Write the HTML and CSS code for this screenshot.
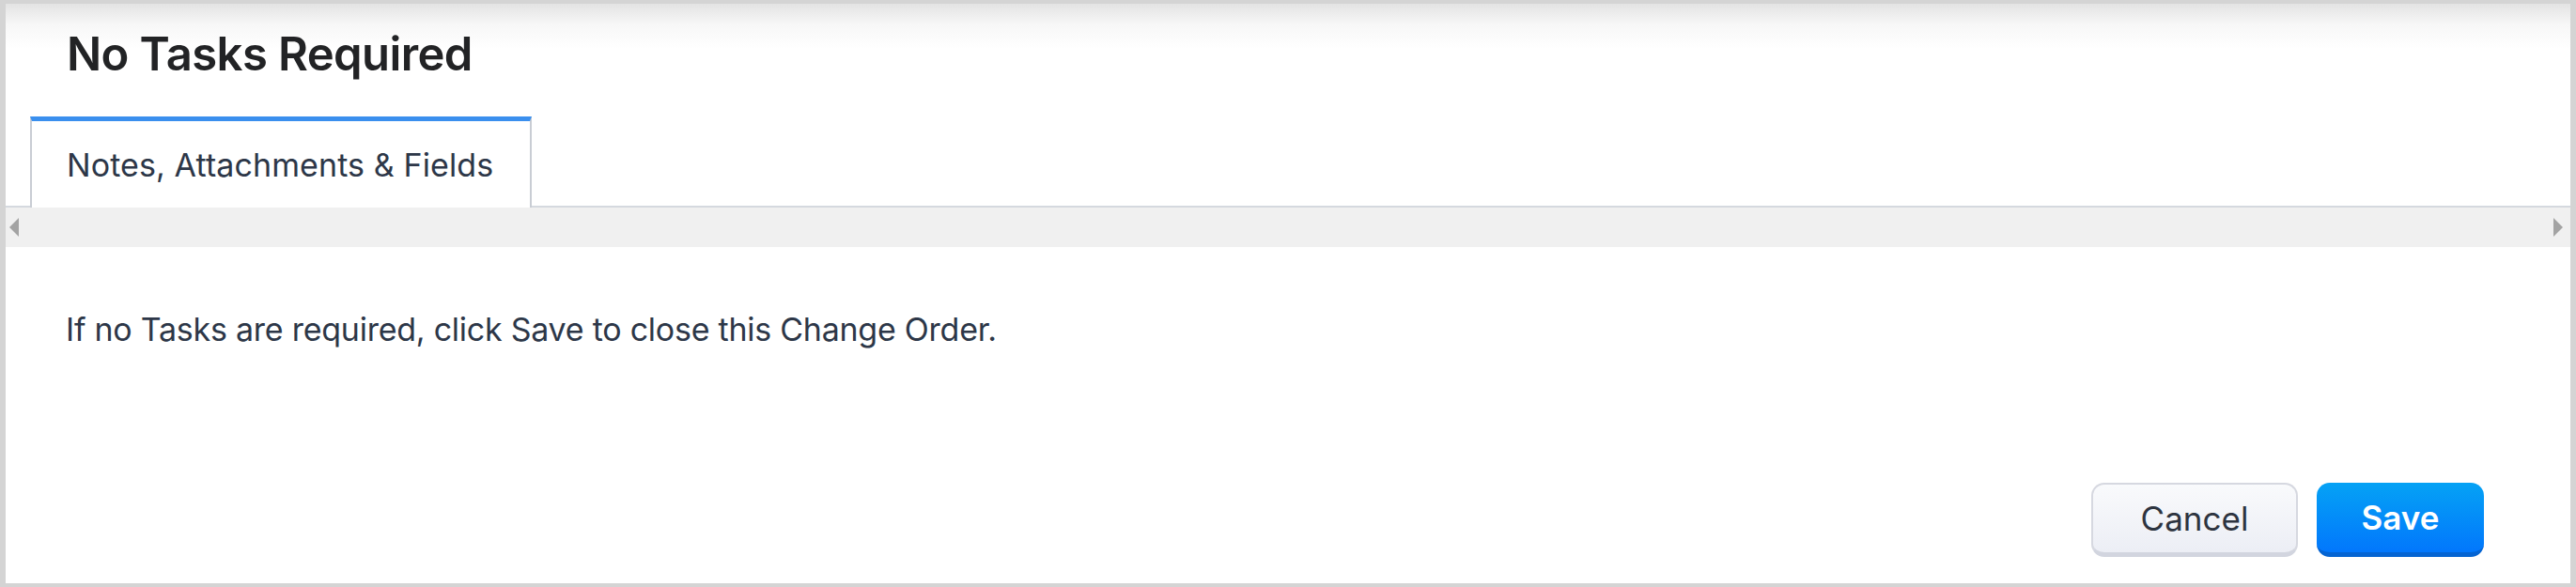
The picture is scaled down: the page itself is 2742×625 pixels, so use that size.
FILE: index.html
```html
<!DOCTYPE html>
<html>
<head>
<meta charset="utf-8">
<link rel="stylesheet" href="styles.css">
</head>
<body>
<div class="frame">
  <header class="header">
    <h1 class="title">No Tasks Required</h1>
  </header>
  <nav class="tabs">
    <div class="tab active">Notes, Attachments &amp; Fields</div>
  </nav>
  <div class="strip">
    <span class="arrow left"></span>
    <span class="arrow right"></span>
  </div>
  <main class="content">
    <p class="message">If no Tasks are required, click Save to close this Change Order.</p>
  </main>
  <footer class="footer">
    <button class="btn cancel">Cancel</button>
    <button class="btn save">Save</button>
  </footer>
</div>
</body>
</html>
```
FILE: styles.css
```css
html, body {
  margin: 0;
  padding: 0;
  height: 100%;
  background: #d4d4d4;
}
body {
  font-family: Inter, Lato, "Noto Sans", sans-serif;
}
.frame {
  box-sizing: border-box;
  height: 625px;
  border-style: solid;
  border-color: #d4d4d4;
  border-width: 4px 6px 4px 6px;
  background: linear-gradient(to bottom, #e3e3e3 0px, #f7f7f7 22px, #ffffff 48px, #ffffff 100%);
  display: flex;
  flex-direction: column;
}
.header {
  padding: 24px 0 0 65px;
}
.title {
  margin: 0;
  font-size: 49px;
  line-height: 60px;
  font-weight: 600;
  letter-spacing: -0.6px;
  color: #222325;
}
.tabs {
  display: flex;
  padding-left: 26px;
  margin-top: 36px;
  border-bottom: 2px solid #d5d9df;
}
.tab {
  box-sizing: border-box;
  height: 97px;
  margin-bottom: -2px;
  padding: 0 39px 0 37px;
  display: flex;
  align-items: center;
  background: #fff;
  border-top: 5px solid #3a8fee;
  border-left: 2px solid #c9cdd4;
  border-right: 2px solid #c9cdd4;
  font-size: 34px;
  letter-spacing: 0.1px;
  color: #2d3748;
}
.strip {
  height: 42px;
  background: #f0f0f0;
  display: flex;
  align-items: center;
  justify-content: space-between;
  padding: 0 8px 0 4px;
}
.arrow {
  width: 0;
  height: 0;
  border-top: 10px solid transparent;
  border-bottom: 10px solid transparent;
}
.arrow.left {
  border-right: 10px solid #a3a3a3;
}
.arrow.right {
  border-left: 10px solid #a3a3a3;
}
.content {
  flex: 1;
  padding: 67px 0 0 64px;
}
.message {
  margin: 0;
  font-size: 34px;
  line-height: 42px;
  letter-spacing: -0.25px;
  color: #2d3748;
}
.footer {
  display: flex;
  justify-content: flex-end;
  gap: 20px;
  padding: 0 92px 28px 0;
}
.btn {
  box-sizing: border-box;
  height: 79px;
  border-radius: 14px;
  font-family: Inter, Lato, "Noto Sans", sans-serif;
  font-size: 35px;
  cursor: pointer;
}
.cancel {
  width: 220px;
  color: #2d3440;
  background: linear-gradient(to bottom, #f9fafc, #eceef5);
  border: 2px solid #d6d8e0;
  border-bottom: 5px solid #d2d5df;
}
.save {
  width: 178px;
  color: #ffffff;
  font-weight: 600;
  background: linear-gradient(to bottom, #05a2f5, #0277fc);
  border: none;
  border-bottom: 5px solid #0564d2;
}
```
